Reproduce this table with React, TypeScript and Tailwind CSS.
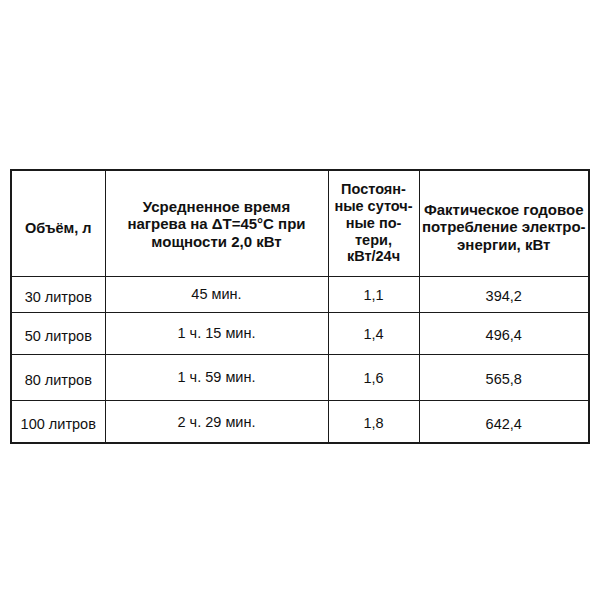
import React from "react";

const rows = [
  { v: "30 литров", t: "45 мин.", p: "1,1", e: "394,2", h: "h-[36px]" },
  { v: "50 литров", t: "1 ч. 15 мин.", p: "1,4", e: "496,4", h: "h-[42px]" },
  { v: "80 литров", t: "1 ч. 59 мин.", p: "1,6", e: "565,8", h: "h-[46px]" },
  { v: "100 литров", t: "2 ч. 29 мин.", p: "1,8", e: "642,4", h: "h-[43px]" },
];

export default function App() {
  return (
    <div className="w-[600px] h-[599px] bg-white pt-[169px] pl-[10px] text-[#111]" style={{ fontFamily: '"Liberation Sans", Arial, sans-serif' }}>
      <table className="border-collapse table-fixed w-[578px] border-2 border-[#1a1a1a]">
        <colgroup>
          <col className="w-[94px]" />
          <col className="w-[223px]" />
          <col className="w-[91px]" />
          <col className="w-[170px]" />
        </colgroup>
        <thead>
          <tr className="h-[106px]">
            <th className="border-[1.5px] border-[#1a1a1a] text-[14.5px] leading-[18px] align-middle pt-[10px] font-bold px-0 whitespace-nowrap">Объём, л</th>
            <th className="border-[1.5px] border-[#1a1a1a] text-[15px] leading-[17.5px] align-middle font-bold px-0 pt-[1px] whitespace-nowrap">
              Усредненное время<br />нагрева на ΔT=45°C при<br />мощности 2,0 кВт
            </th>
            <th className="border-[1.5px] border-[#1a1a1a] text-[14.5px] leading-[16.7px] align-middle font-bold px-0 whitespace-nowrap">
              Постоян-<br />ные суточ-<br />ные по-<br />тери,<br />кВт/24ч
            </th>
            <th className="border-[1.5px] border-[#1a1a1a] text-[15px] leading-[17.5px] align-middle font-bold pt-[7px] px-0 whitespace-nowrap">
              Фактическое годовое<br />потребление электро-<br />энергии, кВт
            </th>
          </tr>
        </thead>
        <tbody>
          {rows.map((r) => (
            <tr key={r.v} className={r.h}>
              <td className="border-[1.5px] border-[#1a1a1a] text-[14.5px] text-center align-middle pt-[6px] leading-none">{r.v}</td>
              <td className="border-[1.5px] border-[#1a1a1a] text-[14.5px] text-center align-middle pt-[1px] leading-none">{r.t}</td>
              <td className="border-[1.5px] border-[#1a1a1a] text-[14.5px] text-center align-middle pt-[3px] leading-none">{r.p}</td>
              <td className="border-[1.5px] border-[#1a1a1a] text-[14.5px] text-center align-middle pt-[5px] leading-none">{r.e}</td>
            </tr>
          ))}
        </tbody>
      </table>
    </div>
  );
}
